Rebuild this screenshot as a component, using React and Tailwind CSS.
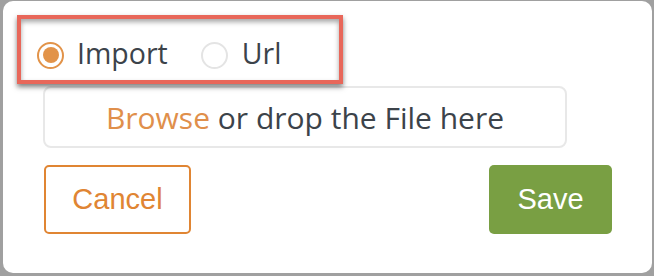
export default function App() {
  return (
    <div className="w-[654px] h-[276px] bg-[#a0a0a0] pt-[1px] pl-[3px]">
      <div
        className="w-[649px] h-[272px] bg-white rounded-[10px] flex flex-col"
        style={{ fontFamily: "'Open Sans', 'Noto Sans', sans-serif" }}
      >
        <div className="relative ml-[34px] mt-[40px] h-[28px] flex items-center self-start">
          <div className="absolute left-[-20px] top-[-26px] w-[326px] h-[69px] border-[4px] border-[#e8675a] shadow-[0_3px_5px_rgba(0,0,0,0.5),inset_0_3px_5px_rgba(0,0,0,0.35)] pointer-events-none" />
          <div className="w-[27px] h-[27px] rounded-full border-2 border-[#e29349] flex items-center justify-center">
            <div className="w-[16px] h-[16px] rounded-full bg-[#e29349]" />
          </div>
          <span className="ml-[13px] mb-[3px] text-[28.5px] leading-none text-[#3c434a]">Import</span>
          <div className="ml-[33px] w-[27px] h-[27px] rounded-full border-2 border-[#e4e4e4]" />
          <span className="ml-[14px] mb-[3px] text-[28.5px] leading-none text-[#3c434a]">Url</span>
        </div>
        <div className="ml-[40px] mt-[17px] w-[524px] h-[62px] border-2 border-[#e8e8e8] rounded-[8px] flex items-center justify-center text-[30px] text-[#3c434a]">
          <span className="text-[#e08f4b]">Browse</span>
          <span>&nbsp;or drop the File here</span>
        </div>
        <div
          className="mt-[17px] pl-[41px] pr-[40px] flex justify-between"
          style={{ fontFamily: "'Liberation Sans', Arial, sans-serif" }}
        >
          <button className="w-[147px] h-[69px] border-2 border-[#e08533] rounded-[5px] text-[#e08533] text-[29px] flex items-center justify-center">
            Cancel
          </button>
          <button className="w-[123px] h-[69px] bg-[#799f43] rounded-[5px] text-white text-[29px] flex items-center justify-center">
            Save
          </button>
        </div>
      </div>
    </div>
  );
}
